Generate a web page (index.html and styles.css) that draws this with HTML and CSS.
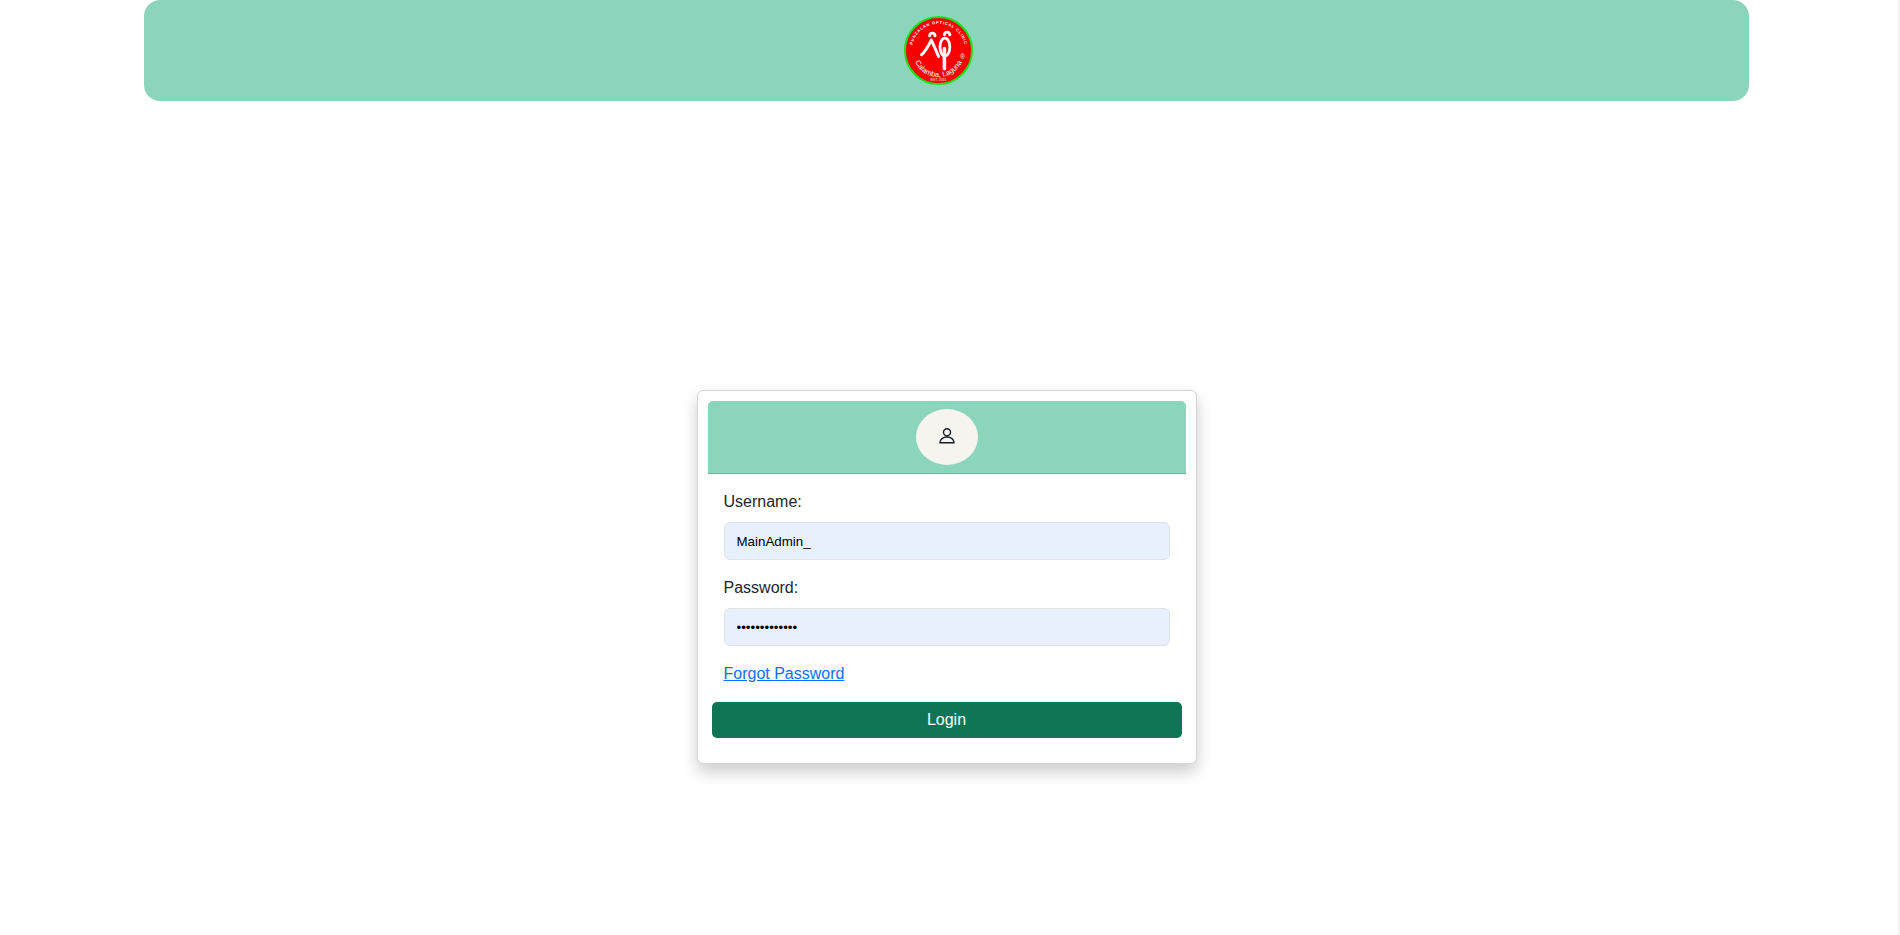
FILE: index.html
```html
<!DOCTYPE html>
<html lang="en">
<head>
    <meta charset="UTF-8">
    <meta name="viewport" content="width=device-width, initial-scale=1.0">
    <title>Login</title>
    <link rel="stylesheet" href="styles.css">
</head>
<body>
<div class="page">
    <header class="top-header">
        <svg class="logo" viewBox="0 0 70 70" role="img" aria-label="Punzalan Optical Clinic">
            <defs>
                <path id="arcTop" d="M8.300 39A27 27 0 1 1 61.700 39"></path>
                <path id="arcBottom" d="M9.500 41A26 26 0 0 0 60.500 41"></path>
            </defs>
            <circle cx="35" cy="35" r="34" fill="#fb0000" stroke="#22dd11" stroke-width="2"></circle>
            <text class="logo-arc"><textPath href="#arcTop" startOffset="50%" text-anchor="middle">PUNZALAN OPTICAL CLINIC</textPath></text>
            <text class="logo-place"><textPath href="#arcBottom" startOffset="50%" text-anchor="middle">Calamba, Laguna</textPath></text>
            <text class="logo-est" x="35" y="66" text-anchor="middle">EST. 2015</text>
            <text class="logo-reg" x="59.300" y="44" text-anchor="middle">®</text>
            <g fill="none" stroke="#fff" stroke-linecap="round" stroke-linejoin="round">
                <path stroke-width="3" d="M17.700 39.300C22 36 25 30 27.700 24.500C30 29 32.500 35 35 41"></path>
                <ellipse stroke-width="2.800" cx="41.500" cy="31.500" rx="5" ry="9"></ellipse>
                <path stroke-width="3.600" d="M41 33V53.500"></path>
                <path stroke-width="3" d="M26 20C26.500 16.500 31 16.500 31.500 20"></path>
                <path stroke-width="3" d="M41 19C41.500 15.500 46 15.500 46.500 19"></path>
            </g>
        </svg>
    </header>

    <main class="login-area">
        <section class="login-card">
            <div class="login-head">
                <span class="avatar">
                    <svg viewBox="0 0 16 16" width="16" height="16" fill="none" stroke="#16202c" stroke-width="1.400" aria-hidden="true">
                        <circle cx="8" cy="4.300" r="3.500"></circle>
                        <path d="M1 14.800H15C15 11.400 12 9 8 9C4 9 1 11.400 1 14.800Z"></path>
                    </svg>
                </span>
            </div>
            <form class="login-form">
                <div class="field">
                    <label for="username">Username:</label>
                    <input type="text" id="username" value="MainAdmin_">
                </div>
                <div class="field">
                    <label for="password">Password:</label>
                    <input type="password" id="password" value="MainAdmin_123">
                </div>
                <a class="forgot" href="#">Forgot Password</a>
                <button type="button" class="login-btn">Login</button>
            </form>
        </section>
    </main>
</div>
</body>
</html>
```

FILE: styles.css
```css
* {
    box-sizing: border-box;
}

html, body {
    height: 100%;
}

body {
    margin: 0;
    font-family: 'Liberation Sans', Arial, sans-serif;
    font-size: 16px;
    color: #212529;
    background-color: #fff;
    overflow: hidden;
}

.page {
    display: flex;
    flex-direction: column;
    height: 100%;
    padding-right: 5px;
    border-right: 2px solid #f2f2f2;
}

.top-header {
    display: flex;
    justify-content: center;
    align-items: flex-start;
    flex-shrink: 0;
    width: 1605px;
    height: 101px;
    margin: 0 auto;
    padding: 16px 16px 0 0;
    background-color: #8cd5bd;
    border-radius: 16px;
}

.logo {
    display: block;
    width: 69px;
    height: 69px;
}

.logo-arc {
    font-size: 4px;
    font-weight: bold;
    letter-spacing: .8px;
    fill: #fff;
}

.logo-place {
    font-size: 7.500px;
    fill: #fff;
}

.logo-est {
    font-size: 3.500px;
    fill: #fff;
}

.logo-reg {
    font-size: 7px;
    fill: #fff;
}

.login-area {
    display: flex;
    justify-content: center;
    padding-top: 289px;
}

.login-card {
    width: 500px;
    height: 374px;
    padding: 10px;
    background-color: #fff;
    border: 1px solid #d3d3d3;
    border-radius: 6px;
    box-shadow: 0 8px 16px rgba(0, 0, 0, .2);
}

.login-head {
    display: flex;
    justify-content: center;
    height: 73px;
    padding-top: 8px;
    background-color: #8cd5bd;
    border-bottom: 1px solid #73b39e;
    border-radius: 5px 5px 0 0;
}

.avatar {
    display: flex;
    justify-content: center;
    align-items: center;
    width: 62px;
    height: 56px;
    padding-bottom: 2px;
    background-color: #f5f4ef;
    border-radius: 50%;
}

.login-form {
    padding: 19px 4px 0;
}

.field {
    padding: 0 12px;
    margin-bottom: 19px;
}

.field label {
    display: block;
    height: 18px;
    line-height: 18px;
    margin-bottom: 11px;
}

.field input {
    display: block;
    width: 100%;
    height: 38px;
    padding: 0 12px;
    font-family: 'Liberation Sans', Arial, sans-serif;
    font-size: 13.330px;
    color: #000;
    background-color: #e8f0fe;
    border: 1px solid #dee2e6;
    border-radius: 6px;
}

.forgot {
    display: block;
    width: fit-content;
    margin-left: 12px;
    line-height: 18px;
    color: #0d6efd;
}

.login-btn {
    display: block;
    width: 100%;
    height: 36px;
    margin-top: 19px;
    font-family: 'Liberation Sans', Arial, sans-serif;
    font-size: 16px;
    color: #fff;
    background-color: #107556;
    border: none;
    border-radius: 5px;
}
```
